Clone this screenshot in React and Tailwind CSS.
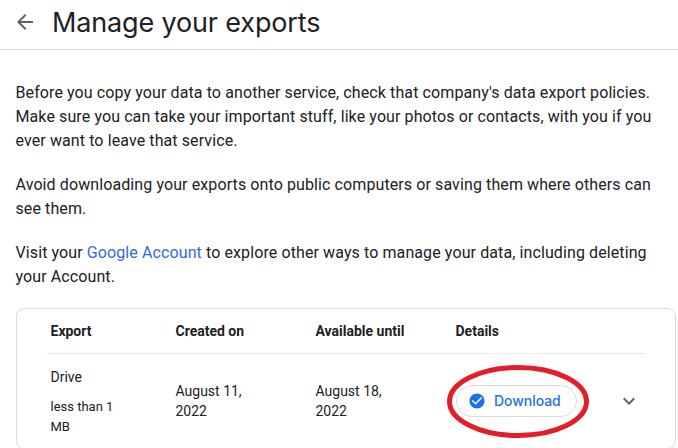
const exportsList = [
  {
    name: "Drive",
    size: "less than 1 MB",
    created: "August 11, 2022",
    available: "August 18, 2022",
  },
];

// ---------- ICONS ----------

function BackIcon() {
  return (
    <svg viewBox="0 0 24 24" className="size-6 fill-[#5f6368]">
      <path d="M20 11H7.83l5.59-5.59L12 4l-8 8 8 8 1.41-1.41L7.83 13H20v-2z" />
    </svg>
  );
}

function CheckIcon() {
  return (
    <svg viewBox="0 0 24 24" className="size-[18px] fill-[#1a73e8]">
      <path d="M12 2C6.48 2 2 6.48 2 12s4.48 10 10 10 10-4.48 10-10S17.52 2 12 2zm-2 15l-5-5 1.41-1.41L10 14.17l7.59-7.59L19 8l-9 9z" />
    </svg>
  );
}

function ExpandIcon() {
  return (
    <svg viewBox="0 0 24 24" className="size-6 fill-[#5f6368]">
      <path d="M16.59 8.59L12 13.17 7.41 8.59 6 10l6 6 6-6z" />
    </svg>
  );
}

// ---------- PARTS ----------

function DownloadButton() {
  return (
    <div className="relative w-[121px]">
      <button className="flex h-8 w-full items-center rounded-full border border-[#dadce0] pl-[11px] font-[Inter,sans-serif] text-[14px] font-medium text-[#1a73e8]">
        <CheckIcon />
        <span className="ml-2 tracking-[-0.05px]">Download</span>
      </button>
      {/* Red highlight ring around the button */}
      <svg
        viewBox="0 0 142 74"
        className="pointer-events-none absolute -top-5 -left-[9px] h-[74px] w-[142px]"
      >
        <ellipse cx="71" cy="36.5" rx="68.5" ry="34" fill="none" stroke="#e41e26" strokeWidth="5" />
      </svg>
    </div>
  );
}

export default function App() {
  return (
    <main className="h-[448px] w-[678px] overflow-hidden bg-white font-[Roboto,sans-serif] text-[#202124]">
      <header className="flex h-[50px] items-center border-b border-[#dadce0] pb-[5px] pl-[13px]">
        <BackIcon />
        <h1 className="mt-[2px] ml-[15px] font-[Inter,sans-serif] text-[27px] leading-9 tracking-[-0.15px] whitespace-nowrap">
          Manage your exports
        </h1>
      </header>

      <section className="space-y-5 pt-[31px] pl-[15.5px] text-base tracking-[0.1px] whitespace-nowrap">
        <p>
          Before you copy your data to another service, check that company's data export policies.
          <br />
          Make sure you can take your important stuff, like your photos or contacts, with you if you
          <br />
          ever want to leave that service.
        </p>
        <p>
          Avoid downloading your exports onto public computers or saving them where others can
          <br />
          see them.
        </p>
        <p>
          Visit your{" "}
          <a href="#" className="text-[#3367e8]">
            Google Account
          </a>{" "}
          to explore other ways to manage your data, including deleting
          <br />
          your Account.
        </p>
      </section>

      <div className="mt-[19px] ml-4 h-[141px] w-[660px] rounded-lg border border-[#dadce0] pr-[30px] pl-[30px] text-sm">
        <div className="grid h-[45px] grid-cols-[125px_140px_140px_1fr] items-center border-b border-[#e8eaed] pl-[3.5px] font-bold">
          <div>Export</div>
          <div>Created on</div>
          <div>Available until</div>
          <div>Details</div>
        </div>
        {exportsList.map((item) => (
          <div
            key={item.name}
            className="grid h-[94px] grid-cols-[125px_140px_140px_1fr_32px] items-center pl-[3.5px]"
          >
            <div className="w-[70px] pt-px">
              <div>{item.name}</div>
              <div className="mt-2.5 text-[13px] leading-5">{item.size}</div>
            </div>
            <div className="w-[80px]">{item.created}</div>
            <div className="w-[80px]">{item.available}</div>
            <div className="pl-[0.5px]">
              <DownloadButton />
            </div>
            <button className="ml-[3.5px]">
              <ExpandIcon />
            </button>
          </div>
        ))}
      </div>
    </main>
  );
}
